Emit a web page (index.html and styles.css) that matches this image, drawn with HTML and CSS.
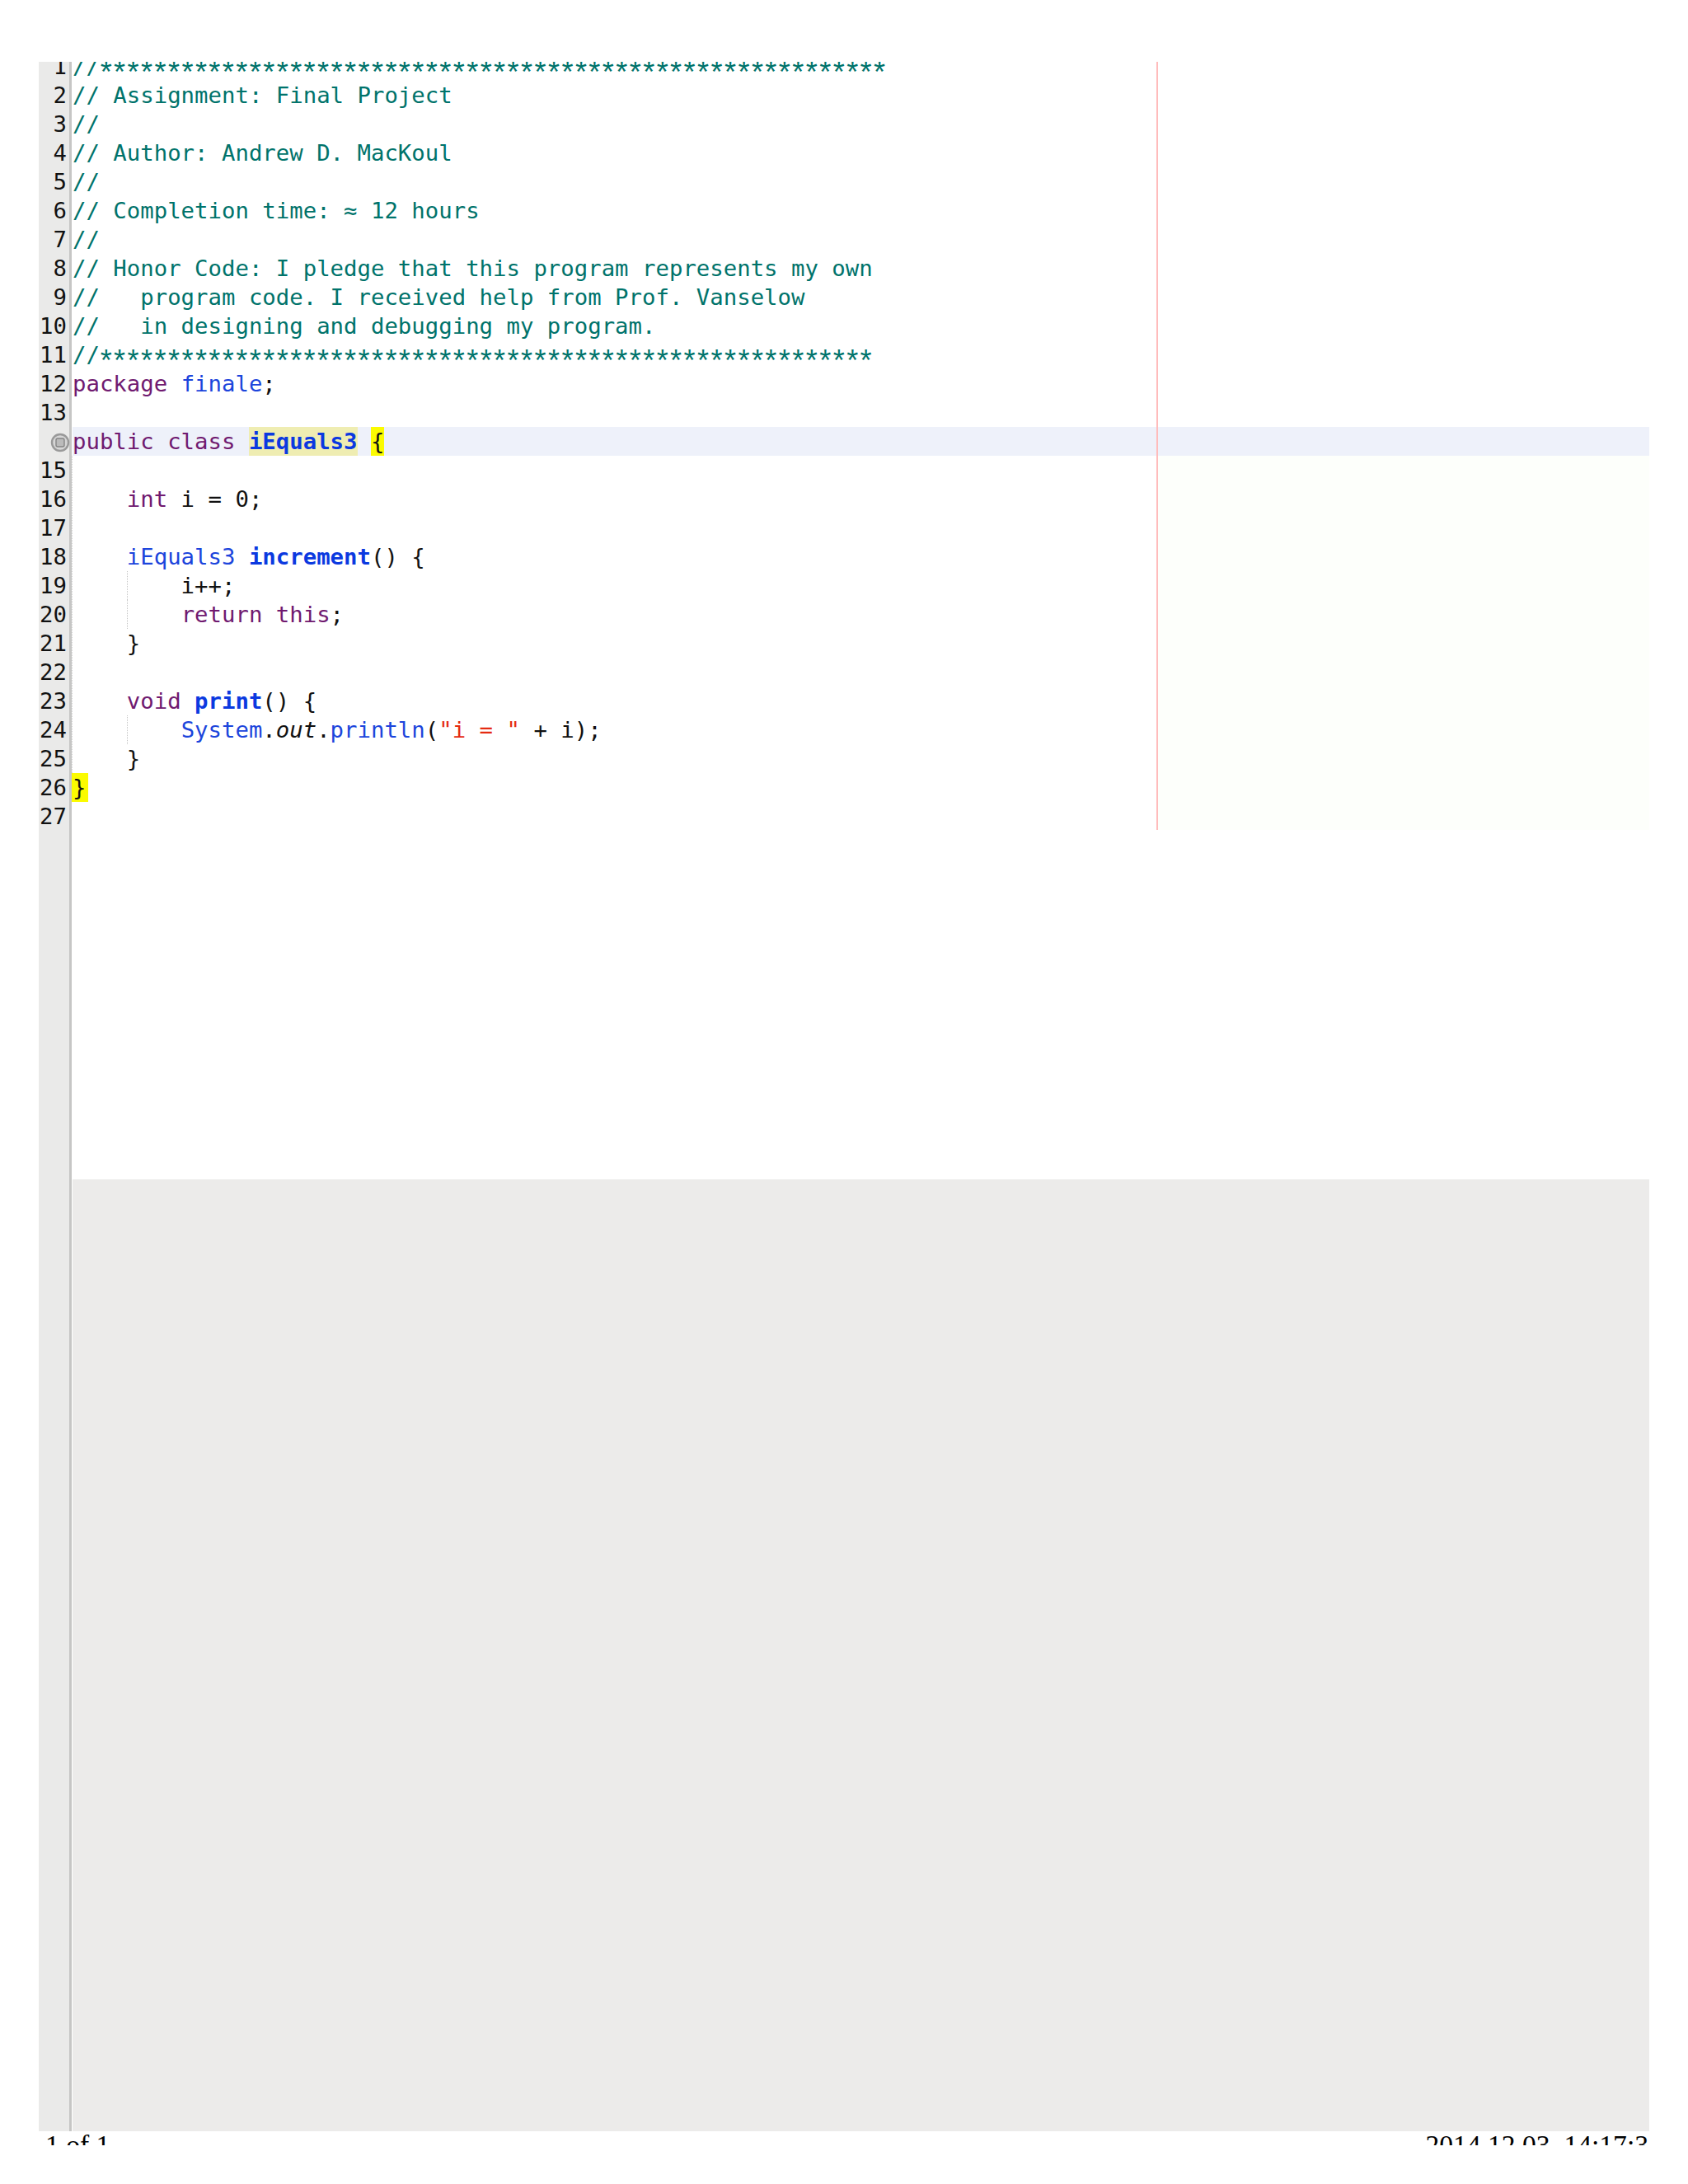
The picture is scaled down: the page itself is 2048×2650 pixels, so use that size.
FILE: index.html
```html
<!DOCTYPE html>
<html lang="en">
<head>
    <meta charset="UTF-8">
    <title>iEquals3.java</title>
    <link rel="stylesheet" href="styles.css">
</head>
<body>

    <div class="page">
        <div class="editor">
            <div class="gutter">
                <div class="num">1</div>
                <div class="num">2</div>
                <div class="num">3</div>
                <div class="num">4</div>
                <div class="num">5</div>
                <div class="num">6</div>
                <div class="num">7</div>
                <div class="num">8</div>
                <div class="num">9</div>
                <div class="num">10</div>
                <div class="num">11</div>
                <div class="num">12</div>
                <div class="num">13</div>
                <div class="num">
                    <svg class="fold" width="24" height="24" viewBox="0 0 24 24">
                        <circle cx="12" cy="12" r="10" fill="#d6d6d6" stroke="#999" stroke-width="2.4"/>
                        <rect x="7" y="7" width="10" height="10" rx="2" fill="#bbb" stroke="#858585" stroke-width="1.4"/>
                    </svg>
                </div>
                <div class="num">15</div>
                <div class="num">16</div>
                <div class="num">17</div>
                <div class="num">18</div>
                <div class="num">19</div>
                <div class="num">20</div>
                <div class="num">21</div>
                <div class="num">22</div>
                <div class="num">23</div>
                <div class="num">24</div>
                <div class="num">25</div>
                <div class="num">26</div>
                <div class="num">27</div>
            </div>
            <div class="ruler"></div>
            <div class="main">
                <div class="code">
                    <div class="margin-shade"></div>
                    <div class="print-margin"></div>
                    <div class="fold-line"></div>
                    <div class="lines">
                        <div class="line cm">//<span class="stars">**********************************************************</span></div>
                        <div class="line cm">// Assignment: Final Project</div>
                        <div class="line cm">//</div>
                        <div class="line cm">// Author: Andrew D. MacKoul</div>
                        <div class="line cm">//</div>
                        <div class="line cm">// Completion time: ≈ 12 hours</div>
                        <div class="line cm">//</div>
                        <div class="line cm">// Honor Code: I pledge that this program represents my own</div>
                        <div class="line cm">//   program code. I received help from Prof. Vanselow</div>
                        <div class="line cm">//   in designing and debugging my program.</div>
                        <div class="line cm">//<span class="stars">*********************************************************</span></div>
                        <div class="line"><span class="kw">package</span> <span class="ty">finale</span>;</div>
                        <div class="line"></div>
                        <div class="line current"><span class="kw">public</span> <span class="kw">class</span> <span class="ty bold occurrence">iEquals3</span> <span class="match">{</span></div>
                        <div class="line"></div>
                        <div class="line">    <span class="kw">int</span> i = 0;</div>
                        <div class="line"></div>
                        <div class="line">    <span class="ty">iEquals3</span> <span class="ty bold">increment</span>() {</div>
                        <div class="line scope">        i++;</div>
                        <div class="line scope">        <span class="kw">return</span> <span class="kw">this</span>;</div>
                        <div class="line">    }</div>
                        <div class="line"></div>
                        <div class="line">    <span class="kw">void</span> <span class="ty bold">print</span>() {</div>
                        <div class="line scope">        <span class="ty">System</span>.<em>out</em>.<span class="ty">println</span>(<span class="str">"i = "</span> + i);</div>
                        <div class="line">    }</div>
                        <div class="line"><span class="match first">}</span></div>
                        <div class="line"></div>
                    </div>
                </div>
                <div class="blank"></div>
            </div>
        </div>
        <div class="footer">
            <span>1 of 1</span>
            <span>2014.12.03. 14:17:3</span>
        </div>
    </div>

</body>
</html>
```

FILE: styles.css
```css
body {
    margin: 0;
    background-color: #fff;
}

.page {
    padding: 75px 47px 0;
}

.editor {
    display: grid;
    grid-template-columns: 37px 3px 1fr;
    height: 2511px;
    overflow: hidden;
    font-family: "DejaVu Sans Mono", monospace;
    font-size: 27.33px;
    line-height: 35px;
    color: #111;
}

.gutter {
    background-color: #eaeae9;
    text-align: right;
    padding-right: 3px;
}

.num {
    height: 35px;
    position: relative;
}

.num:first-child {
    margin-top: -12.5px;
}

.fold {
    position: absolute;
    right: -4px;
    top: 7px;
}

.ruler {
    background-color: #c6c6c5;
}

.main {
    display: flex;
    flex-direction: column;
    min-width: 0;
}

.code {
    height: 1356px;
    flex-shrink: 0;
    position: relative;
    background-color: #fff;
    overflow: hidden;
}

.lines {
    margin-top: -12.5px;
    padding-left: 1px;
    position: relative;
}

.line {
    height: 35px;
    white-space: pre;
    position: relative;
}

.cm {
    color: #00736b;
}

/* the asterisks are bigger and sit lower in the reference */
.stars {
    font-family: "Liberation Mono", monospace;
    font-size: 36px;
    letter-spacing: -5.14px;
    margin-left: -3px;
    position: relative;
    top: 11px;
}

.kw {
    color: #701a70;
}

.ty {
    color: #1c45dc;
}

.bold {
    font-weight: bold;
    color: #0b39e0;
}

.str {
    color: #e52b12;
}

em {
    font-style: italic;
}

.current {
    background-color: #eef1fa;
}

.occurrence {
    background-color: #efedb2;
    display: inline-block;
    height: 35px;
}

.match {
    background-color: #fbfb00;
    display: inline-block;
    height: 35px;
}

.match.first {
    margin-left: -1px;
    padding: 0 3px 0 1px;
}

.scope::before {
    content: "";
    position: absolute;
    left: 66px;
    top: 0;
    bottom: 0;
    border-left: 1px dotted #c4c4c4;
}

.margin-shade {
    position: absolute;
    left: 1318px;
    right: 0;
    top: 477px;
    height: 455px;
    background-color: #fdfffb;
}

.print-margin {
    position: absolute;
    left: 1316px;
    top: 0;
    width: 2px;
    height: 932px;
    background-color: #ffbcbc;
    z-index: 1;
}

.fold-line {
    position: absolute;
    left: 0;
    top: 478px;
    height: 385px;
    border-left: 1px dotted #d0d0d0;
    z-index: 1;
}

.blank {
    flex: 1;
    background-color: #ecebea;
    margin-left: 1px;
}

.footer {
    display: flex;
    justify-content: space-between;
    height: 17px;
    overflow: hidden;
    padding: 0 1px 0 8px;
    font-family: "Liberation Serif", serif;
    font-size: 33.6px;
    line-height: 33px;
    color: #000;
}
```
